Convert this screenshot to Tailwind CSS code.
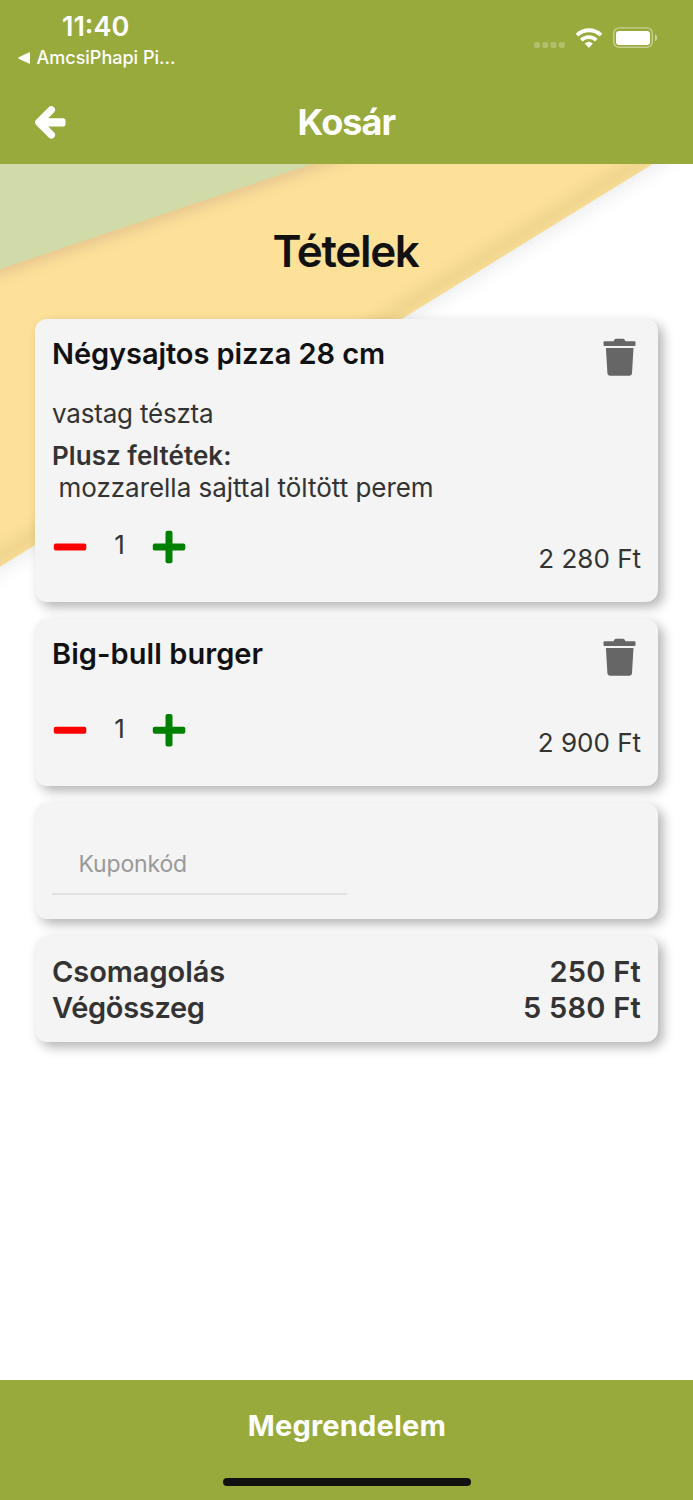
<!DOCTYPE html>
<html lang="hu">
<head>
<meta charset="utf-8">
<title>Kosár</title>
<script src="https://cdn.jsdelivr.net/npm/@tailwindcss/browser@4"></script>
</head>
<body class="bg-white">
<div class="relative isolate flex h-[1500px] w-[693px] flex-col overflow-hidden font-['Inter',sans-serif] text-[#333]">
  <svg class="absolute left-0 top-[164px] -z-10" width="693" height="440" viewBox="0 164 693 440">
    <defs>
      <filter id="soft" x="-20%" y="-20%" width="140%" height="140%"><feGaussianBlur stdDeviation="9"/></filter>
      <filter id="edge" x="-20%" y="-20%" width="140%" height="140%"><feGaussianBlur stdDeviation="7"/></filter>
      <clipPath id="yellow"><path d="M-40 124H717.500L-40 591.500Z"/></clipPath>
    </defs>
    <path d="M-60 124H717.500L-60 603Z" transform="translate(2 4)" fill="#9094a0" opacity=".18" filter="url(#soft)"/>
    <g clip-path="url(#yellow)">
      <rect x="-40" y="120" width="760" height="480" fill="#fde199"/>
      <path d="M711 118L-46 585" stroke="#d4bd78" stroke-width="12" opacity=".45" filter="url(#edge)"/>
      <path d="M-60 124H431L-60 290Z" transform="translate(1 5)" fill="#cfa884" opacity=".5" filter="url(#edge)"/>
    </g>
    <path d="M-40 124H431L-40 282.500Z" fill="#d1daa9"/>
  </svg>

  <header class="h-[164px] shrink-0 bg-[#98aa3c] text-white">
    <div class="flex h-[80px] justify-between">
      <div class="pl-[18px] pt-[11px]">
        <div class="pl-[44px] text-[27px] font-semibold leading-[31px]"><span>11:40</span></div>
        <div class="flex items-center gap-[5.500px] text-[18px] font-medium leading-[31px]">
          <svg width="13" height="12" viewBox="0 0 13 12" fill="currentColor"><path d="M.8 5.300 10.800.4Q12 0 12 1.200V10.800Q12 12 10.800 11.600L.8 6.700Q-.4 6 .8 5.300Z"/></svg>
          <span>AmcsiPhapi Pi...</span>
        </div>
      </div>
      <svg class="mt-[24px] mr-[33px]" width="128" height="28" viewBox="532 24 128 28" fill="#fff">
        <g opacity=".25"><rect x="534" y="42" width="6" height="6" rx="2"/><rect x="542.300" y="42" width="6" height="6" rx="2"/><rect x="550.500" y="42" width="6" height="6" rx="2"/><rect x="558.800" y="42" width="6" height="6" rx="2"/></g>
        <g fill="none" stroke="#fff" stroke-width="3.800"><path d="M577 35.200A17 17 0 0 1 601 35.200"/><path d="M581.300 40.200A10.800 10.800 0 0 1 596.300 40.200"/></g>
        <path d="M584.800 43.600Q588.800 40 592.800 43.600L589.500 47.300Q588.800 48 588.100 47.300Z"/>
        <rect x="613.700" y="27.900" width="38.600" height="19.400" rx="5.500" fill="none" stroke="#fff" stroke-width="1.400" opacity=".45"/>
        <rect x="616" y="31" width="34" height="14" rx="3"/>
        <path d="M655 34.300Q657.200 35.500 657.200 37.800T655 41.300Z" opacity=".5"/>
      </svg>
    </div>
    <div class="relative flex h-[84px] items-center justify-center">
      <svg class="absolute left-[34px] top-[25px]" width="33" height="34" viewBox="34 105 33 34" fill="none" stroke="#fff" stroke-width="7.400" stroke-linecap="round" stroke-linejoin="round"><path d="M51.300 109.800 38.800 122.300 51.300 134.800"/><rect x="40" y="118.200" width="25.500" height="8.200" rx="2.500" fill="#fff" stroke="none"/></svg>
      <h1 class="text-[36px] font-bold leading-[40px] tracking-[-0.9px]"><span>Kosár</span></h1>
    </div>
  </header>

  <main class="flex flex-1 flex-col px-[35px]">
    <h2 class="pr-[2px] pt-[60px] text-center text-[44px] font-semibold leading-[54px] tracking-[-1.3px] text-[#111]"><span>Tételek</span></h2>

    <div class="mt-[41px] flex flex-col gap-[17px]">
      <section class="flex h-[283px] flex-col rounded-[12px] bg-[#f4f4f4] px-[17px] shadow-[5px_5px_12px_rgba(0,0,0,0.3)]">
        <div class="flex h-[70px] justify-between">
          <h3 class="text-[29px] font-semibold leading-[70px] tracking-[-0.08px] text-[#111]"><span>Négysajtos pizza 28 cm</span></h3>
          <svg class="mr-[5px] mt-[19px]" width="33" height="39" viewBox="0 0 33 39" fill="#666"><path d="M1.500 3.300H10.500L11.500 1.500Q12 .8 13 .8H20Q21 .8 21.500 1.500L22.500 3.300H31.500Q32.500 3.300 32.500 4.300V7Q32.500 8 31.500 8H1.500Q.5 8 .5 7V4.300Q.5 3.300 1.500 3.300ZM2.900 10H30.500L29 35Q28.800 37.800 26 37.800H7.400Q4.600 37.800 4.400 35Z"/></svg>
        </div>
        <p class="mt-[9px] text-[26px] leading-[32px] tracking-[-0.2px]"><span>vastag tészta</span></p>
        <p class="mt-[9.500px] text-[26px] font-semibold leading-[32px] tracking-[0.05px]"><span>Plusz feltétek:</span></p>
        <p class="pl-[6.500px] text-[26px] leading-[32px] tracking-[-0.03px]"><span>mozzarella sajttal töltött perem</span></p>
        <div class="mt-[25px] flex h-[68px] justify-between text-[26px]">
          <div class="flex h-[35px]">
            <svg class="ml-[1px] mt-[1px]" width="34" height="34" viewBox="0 0 34 34"><rect x=".8" y="13.500" width="32.500" height="7" rx="2" fill="#f00"/></svg>
            <span class="w-[65px] text-center leading-[32px]"><span>1</span></span>
            <svg class="mt-[1px]" width="34" height="34" viewBox="0 0 34 34" fill="#008000"><rect x=".8" y="13.500" width="32.500" height="7" rx="2"/><rect x="13.500" y=".8" width="7" height="32.500" rx="2"/></svg>
          </div>
          <span class="pt-[13px] leading-[34px]"><span>2 280 Ft</span></span>
        </div>
      </section>

      <section class="flex h-[166.500px] flex-col rounded-[12px] bg-[#f4f4f4] px-[17px] shadow-[5px_5px_12px_rgba(0,0,0,0.3)]">
        <div class="flex h-[70px] justify-between">
          <h3 class="text-[29px] font-semibold leading-[70px] tracking-[0.06px] text-[#111]"><span>Big-bull burger</span></h3>
          <svg class="mr-[5px] mt-[19px]" width="33" height="39" viewBox="0 0 33 39" fill="#666"><path d="M1.500 3.300H10.500L11.500 1.500Q12 .8 13 .8H20Q21 .8 21.500 1.500L22.500 3.300H31.500Q32.500 3.300 32.500 4.300V7Q32.500 8 31.500 8H1.500Q.5 8 .5 7V4.300Q.5 3.300 1.500 3.300ZM2.900 10H30.500L29 35Q28.800 37.800 26 37.800H7.400Q4.600 37.800 4.400 35Z"/></svg>
        </div>
        <div class="mt-[23px] flex justify-between text-[26px]">
          <div class="flex h-[35px]">
            <svg class="ml-[1px] mt-[1px]" width="34" height="34" viewBox="0 0 34 34"><rect x=".8" y="13.800" width="32.500" height="7" rx="2" fill="#f00"/></svg>
            <span class="w-[65px] text-center leading-[33px]"><span>1</span></span>
            <svg class="mt-[1px]" width="34" height="34" viewBox="0 0 34 34" fill="#008000"><rect x=".8" y="13.800" width="32.500" height="7" rx="2"/><rect x="13.500" y="1.100" width="7" height="32.500" rx="2"/></svg>
          </div>
          <span class="pt-[13.500px] leading-[34px]"><span>2 900 Ft</span></span>
        </div>
      </section>

      <section class="h-[116.500px] rounded-[12px] bg-[#f4f4f4] px-[17px] pt-[30px] shadow-[5px_5px_12px_rgba(0,0,0,0.3)]">
        <div class="h-[62px] w-[294.500px] border-b-2 border-[#e2e2e2] pl-[26.500px] text-[23px] leading-[62px] tracking-[-0.15px] text-[#999]"><span>Kuponkód</span></div>
      </section>

      <section class="h-[106px] rounded-[12px] bg-[#f4f4f4] px-[17px] pt-[18px] text-[29px] font-semibold leading-[36px] shadow-[5px_5px_12px_rgba(0,0,0,0.3)]">
        <div class="flex justify-between"><span class="tracking-[-0.05px]">Csomagolás</span><span class="tracking-[0.25px]">250 Ft</span></div>
        <div class="flex justify-between"><span class="tracking-[-0.3px]">Végösszeg</span><span class="tracking-[0.25px]">5 580 Ft</span></div>
      </section>
    </div>
  </main>

  <footer class="flex h-[120px] shrink-0 flex-col items-center bg-[#98aa3c]">
    <div class="pl-px pt-[25px] text-[29px] font-bold leading-[41px] tracking-[0.2px] text-white"><span>Megrendelem</span></div>
    <div class="mt-[32px] h-[8px] w-[248px] rounded-full bg-[#111]"></div>
  </footer>
</div>
</body>
</html>
